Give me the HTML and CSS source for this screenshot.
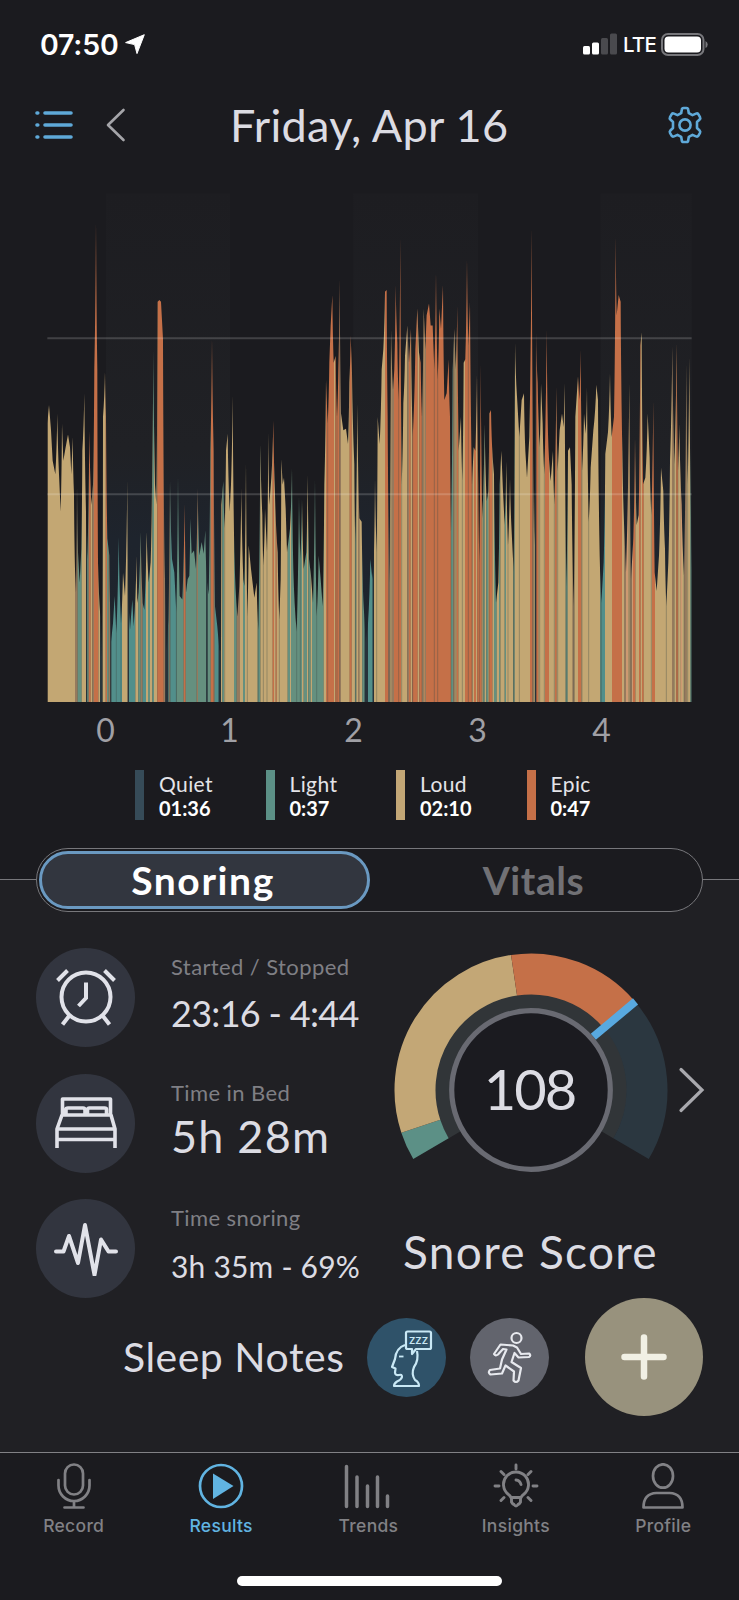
FILE: index.html
```html
<!DOCTYPE html>
<html lang="en">
<head>
    <meta charset="UTF-8">
    <meta name="viewport" content="width=device-width, initial-scale=1.0">
    <title>Sleep Results</title>
    <link rel="stylesheet" href="styles.css">
</head>
<body>

    <div class="status-bar">
        <span class="time">07:50</span>
        <svg class="location" width="20" height="20" viewBox="0 0 20 20"><path d="M19.3.7 12 19.6 9.6 10.6.6 8.6Z" fill="#fff" stroke="#fff" stroke-linejoin="round"/></svg>
        <svg class="signal" width="34" height="22" viewBox="0 0 34 22">
            <rect x="0" y="13" width="7" height="8.500" rx="1.500" fill="#fff"/>
            <rect x="9" y="9.500" width="7" height="12" rx="1.500" fill="#fff"/>
            <rect x="18" y="5" width="7" height="16.500" rx="1.500" fill="#4a4a4e"/>
            <rect x="27" y="0.500" width="7" height="21" rx="1.500" fill="#4a4a4e"/>
        </svg>
        <span class="network">LTE</span>
        <svg class="battery" width="47" height="23" viewBox="0 0 47 23">
            <rect x="1" y="1" width="41.500" height="21" rx="6" fill="none" stroke="#77777b" stroke-width="2"/>
            <rect x="3.500" y="3.500" width="36.500" height="16" rx="4" fill="#fff"/>
            <path d="M44.500 8v7q2.200-1 2.200-3.500T44.500 8Z" fill="#77777b"/>
        </svg>
    </div>

    <div class="header">
        <svg class="menu" width="38" height="30" viewBox="0 0 38 30" stroke="#5fa9d8" stroke-width="3.600" stroke-linecap="round">
            <path d="M2 3h.8M10 3h26M2 15h.8M10 15h26M2 27h.8M10 27h26"/>
        </svg>
        <svg class="prev" width="20" height="34" viewBox="0 0 20 34" fill="none" stroke="#a5a5a9" stroke-width="2.600" stroke-linecap="round" stroke-linejoin="round"><path d="M17.500 2 2 17l15.500 15"/></svg>
        <h1>Friday, Apr 16</h1>
        <svg class="settings" width="38" height="38" viewBox="0 0 38 38" fill="none" stroke="#5fa9d8" stroke-width="2.600" stroke-linejoin="round">
            <path d="M15.800 3.500Q16 2 17.500 2h3q1.500 0 1.700 1.500l.6 3.700 3.700 1.900 3.500-1.500q1.500-.6 2.300.6l1.700 2.900q.7 1.300-.4 2.400L31 16v6l2.600 2.500q1.100 1.100.4 2.400l-1.700 2.900q-.8 1.200-2.300.6l-3.500-1.500-3.700 1.900-.6 3.700Q22 36 20.500 36h-3q-1.500 0-1.700-1.500l-.6-3.700-3.700-1.900L8 30.400q-1.500.6-2.300-.6L4 26.900q-.7-1.300.4-2.400L7 22v-6l-2.600-2.500Q3.300 12.400 4 11.100l1.700-2.900Q6.500 7 8 7.600l3.500 1.500 3.700-1.900Z"/>
            <circle cx="19" cy="19" r="5.600"/>
        </svg>
    </div>

    <svg class="chart" viewBox="21 0 1935 1543" preserveAspectRatio="none">
        <defs>
            <linearGradient id="hourShade" x1="0" y1="0" x2="0" y2="1">
                <stop offset="0" stop-color="#1d1d21"/>
                <stop offset=".5" stop-color="#202125"/>
                <stop offset=".68" stop-color="#1e242d"/>
                <stop offset="1" stop-color="#1f252d"/>
            </linearGradient>
            <clipPath id="levels"><path id="profile"/></clipPath>
        </defs>
        <g fill="url(#hourShade)">
            <rect x="198" y="40" width="372" height="1503"/>
            <rect x="940" y="40" width="374" height="1503"/>
            <rect x="1682" y="40" width="273" height="1503"/>
        </g>
        <g id="bars" clip-path="url(#levels)"></g>
        <path d="M22 468H1955M22 929H1955" stroke="#fff" stroke-opacity=".17" stroke-width="6"/>
    </svg>

    <div class="axis">
        <span>0</span><span>1</span><span>2</span><span>3</span><span>4</span>
    </div>

    <div class="legend">
        <div class="legend-item quiet"><p>Quiet</p><b>01:36</b></div>
        <div class="legend-item light"><p>Light</p><b>0:37</b></div>
        <div class="legend-item loud"><p>Loud</p><b>02:10</b></div>
        <div class="legend-item epic"><p>Epic</p><b>0:47</b></div>
    </div>

    <div class="switch-row">
        <div class="switch">
            <button class="active">Snoring</button>
            <button>Vitals</button>
        </div>
    </div>

    <div class="details">
        <div class="stats">
            <div class="stat">
                <div class="stat-icon">
                    <svg width="62" height="62" viewBox="0 0 62 62" fill="none" stroke="#e1e2e9" stroke-width="4">
                        <circle cx="31" cy="30" r="24.500"/>
                        <path d="M31 15.500V31l-7.500 8M2.500 13.500 12.500 3.500M59.500 13.500 49.500 3.500M14.500 48.500 7.500 57.500M47.500 48.500 54.500 57.500"/>
                    </svg>
                </div>
                <div class="stat-text"><p>Started / Stopped</p><strong class="v-range">23:16 - 4:44</strong></div>
            </div>
            <div class="stat">
                <div class="stat-icon">
                    <svg width="62" height="52" viewBox="0 0 62 52" fill="none" stroke="#e1e2e9" stroke-width="3.600" stroke-linejoin="round">
                        <path d="M7.500 18V2h48v16M11 18v-5.500q0-1.500 2-1.500h15q2 0 2 2V18h2.500v-5q0-2 2-2h15q2 0 2 1.500V18M7 18h49L60 32H2ZM2 51V32M60 32v19M2 42.500h58"/>
                    </svg>
                </div>
                <div class="stat-text"><p>Time in Bed</p><strong class="v-bed">5h 28m</strong></div>
            </div>
            <div class="stat">
                <div class="stat-icon">
                    <svg width="64" height="54" viewBox="0 0 64 54" fill="none" stroke="#e1e2e9" stroke-width="4" stroke-linecap="round" stroke-linejoin="round">
                        <path d="M2 29.500h7.500L15 14l9 27L31 3l9.500 50L47 17.500l7.500 12H62"/>
                    </svg>
                </div>
                <div class="stat-text"><p>Time snoring</p><strong class="v-snoring">3h 35m - 69%</strong></div>
            </div>
        </div>

        <div class="score">
            <svg class="gauge" width="340" height="230" viewBox="380 948 340 230" fill="none">
                <path d="M456.600 1133.700A86.500 86.500 0 1 1 605.400 1133.700" stroke="#313538" stroke-width="19"/>
                <g stroke-width="41">
                    <path id="arcLight" stroke="#5c9086"/>
                    <path id="arcLoud" stroke="#c3a776"/>
                    <path id="arcEpic" stroke="#c57048"/>
                    <path id="arcRest" stroke="#2b3740"/>
                </g>
                <path d="M593.300 1036.800 635.500 1001.400" stroke="#58a9e0" stroke-width="8"/>
                <circle cx="531" cy="1090" r="79.300" fill="#1b1b20" stroke="#696a72" stroke-width="5.200"/>
                <text x="529.500" y="1110" text-anchor="middle" class="score-value">108</text>
                <path d="M681 1069.500 702 1090l-21 20.500" stroke="#a9a9ae" stroke-width="3.200" stroke-linecap="round"/>
            </svg>
            <h2>Snore Score</h2>
        </div>
    </div>

    <div class="notes">
        <h2>Sleep Notes</h2>
        <div class="note sleepy">
            <svg width="79" height="79" viewBox="0 0 79 79" fill="none" stroke="#c9e8f5" stroke-width="2.200" stroke-linejoin="round">
                <path d="M38 27q-9 3-10 14l-3 8 3.500 1.500-.5 4q0 3 4 2.500 3-1 3 2-1 3-5 4.500-3 2-3 4.500h25q0-4-4-6-4-6-1-13 5-7 3-16"/>
                <path d="M32 38.500h4.500" stroke-width="1.800"/>
                <path d="M39 15q0-1.500 1.500-1.500h22q1.500 0 1.500 1.500v14.500q0 1.500-1.500 1.500H49l-4 5v-5h-4.500Q39 31 39 29.500Z"/>
                <text x="51.800" y="26" text-anchor="middle" class="zzz">ZZZ</text>
            </svg>
        </div>
        <div class="note workout">
            <svg width="79" height="79" viewBox="0 0 79 79" fill="none" stroke="#e7e9ee" stroke-width="2.200" stroke-linejoin="round" stroke-linecap="round">
                <circle cx="46.500" cy="20" r="5"/>
                <path d="M43 27.500l-12.500-1-6.500 9.500q1.500 2.500 4 .5L33 31l3.500.5-4.500 10-2 9-10 1.500q-2.500 2.500.5 4.500L32 55.500l3.500-8 8.500 6-.5 9q2.500 3 5 0L51 50l-9.500-6 3-9 4 4.500 10.500-.5q2.500-2 0-3.500l-8 .5-4-6.500Z"/>
            </svg>
        </div>
        <div class="add-note">
            <svg width="46" height="46" viewBox="0 0 46 46" stroke="#f1f0e4" stroke-width="6.500" stroke-linecap="round"><path d="M23 3.500v39M3.500 23h39"/></svg>
        </div>
    </div>

    <div class="tab-bar">
        <div class="tab">
            <svg width="48" height="46" viewBox="0 0 48 46" fill="none" stroke="#818185" stroke-width="2.700" stroke-linecap="round">
                <rect x="15" y="1.500" width="18" height="30" rx="9"/>
                <path d="M8.500 17v5.500a15.500 15.500 0 0 0 31 0V17M24 38v6M14.500 44.500h19"/>
            </svg>
            <span>Record</span>
        </div>
        <div class="tab current">
            <svg width="48" height="46" viewBox="0 0 48 46"><circle cx="24" cy="23" r="21" fill="none" stroke="#61b4e2" stroke-width="2.700"/><path d="M16 10.500v25.500L36.500 23Z" fill="#61b4e2"/></svg>
            <span>Results</span>
        </div>
        <div class="tab">
            <svg width="48" height="46" viewBox="0 0 48 46" stroke="#818185" stroke-width="3.500" stroke-linecap="round"><path d="M2.500 3.500V43.500M13 14V43.500M23.500 23v20.500M33.500 14V43.500M43.500 33v10.500"/></svg>
            <span>Trends</span>
        </div>
        <div class="tab">
            <svg width="48" height="46" viewBox="0 0 48 46" fill="none" stroke="#818185" stroke-width="2.900" stroke-linecap="round">
                <path d="M19 34.500q-1-2-2.500-3a12.500 12.500 0 1 1 15 0q-1.500 1-2.500 3ZM19.500 35v4q1 2 2.500 2.500 2 3 4 0Q27.500 41 28.500 39v-4M24 17q4 .5 5 4.500"/>
                <path d="M24 2v4M9 8.500l3 3M39 8.500l-3 3M3 23h4M41 23h4M9 37.500l3-3M39 37.500l-3-3"/>
            </svg>
            <span>Insights</span>
        </div>
        <div class="tab">
            <svg width="48" height="46" viewBox="0 0 48 46" fill="none" stroke="#818185" stroke-width="2.700">
                <ellipse cx="24" cy="13" rx="10" ry="11.700"/>
                <path d="M4.500 44.500q0-14 13-14.500h13q13 .5 13 14.500Z" stroke-linejoin="round"/>
            </svg>
            <span>Profile</span>
        </div>
    </div>
    <div class="home-indicator"></div>

    <script src="chart.js"></script>
</body>
</html>
```
FILE: styles.css
```css
* {
    box-sizing: border-box;
}

body {
    margin: 0;
    width: 739px;
    height: 1600px;
    overflow: hidden;
    background: #1b1b1f;
    color: #dcdce3;
    font-family: Lato, sans-serif;
}

p, h1, h2 {
    margin: 0;
    font-weight: 400;
}

svg {
    display: block;
    flex: none;
}

/* top */
.status-bar {
    display: flex;
    align-items: center;
    height: 88px;
    padding: 0 31px 0 40px;
    font-family: Inter, sans-serif;
    color: #fff;
}

.time {
    width: 85px;
    font-size: 28.500px;
    font-weight: 600;
    letter-spacing: -0.2px;
}

.signal {
    margin-left: auto;
}

.network {
    width: 37px;
    margin: 0 1px 0 6px;
    font-size: 20.500px;
    font-weight: 500;
    letter-spacing: -0.8px;
}

.header {
    display: flex;
    align-items: center;
    height: 74px;
    padding: 0 35px;
}

.prev {
    margin-left: 33px;
}

.header h1 {
    flex: 1;
    padding-left: 104px;
    font-size: 45px;
    line-height: 72px;
    letter-spacing: 0.3px;
    white-space: nowrap;
}

/* chart */
.chart {
    width: 645px;
    height: 522px;
    margin: 18px 0 0 47px;
}

.axis {
    display: grid;
    grid-template-columns: repeat(5, 124px);
    margin-left: 43.500px;
    height: 56px;
    line-height: 56px;
    text-align: center;
    font-size: 32px;
    color: #a0a0a5;
}

.legend {
    display: grid;
    grid-template-columns: repeat(4, 130.500px);
    margin: 12px 0 0 135px;
}

.legend-item {
    height: 50px;
    padding: 2px 0 0 15px;
    border-left: 9px solid;
    font-size: 21px;
    line-height: 24px;
}

.legend-item p {
    color: #e4e4e8;
    letter-spacing: 0.4px;
}

.legend-item b {
    color: #fff;
    font-size: 20px;
}

.quiet { border-color: #364b58; }
.light { border-color: #5c9086; }
.loud { border-color: #c3a776; }
.epic { border-color: #c57048; }

.switch-row {
    margin-top: 28px;
    padding: 0 36px;
    background: linear-gradient(#1b1b1f 31px, #77777b 31px, #77777b 32.500px, #202024 32.500px);
}

.switch {
    display: flex;
    height: 64px;
    padding: 2px;
    border: 1.500px solid #77777b;
    border-radius: 32px;
    background: #1b1b1f;
}

.switch button {
    flex: 1;
    border: 0;
    padding: 0 3px 0 0;
    background: none;
    font: 700 39px/48px Lato, sans-serif;
    letter-spacing: 0.6px;
    color: #717175;
}

.switch .active {
    flex: none;
    width: 331px;
    border: 3.500px solid #6a99c1;
    border-radius: 30px;
    background: #32363f;
    color: #fff;
    letter-spacing: 1.600px;
}

/* details */
.details {
    display: flex;
    height: 388px;
    padding: 36px 0 0 36px;
    background: #202024;
}

.stats {
    width: 344px;
}

.stat {
    display: flex;
    height: 99px;
    margin-bottom: 26.500px;
}

.stat-icon {
    display: flex;
    align-items: center;
    justify-content: center;
    width: 99px;
    height: 99px;
    margin-right: 36px;
    border-radius: 50%;
    background: #32353f;
}

.stat-text {
    white-space: nowrap;
}

.stat-text p {
    font-size: 22px;
    line-height: 38px;
    letter-spacing: 0.4px;
    color: #7f7f84;
}

.stat-text strong {
    display: block;
    font-weight: 400;
    line-height: 54px;
}

.v-range { font-size: 36px; letter-spacing: -0.7px; }
.v-bed { font-size: 45px; margin-top: -3px; letter-spacing: 1.200px; }
.v-snoring { font-size: 30px; margin-top: 2px; letter-spacing: 0.2px; }

.score-value {
    font-size: 56px;
    letter-spacing: -2px;
    fill: #dcdce3;
}

.score h2 {
    width: 301px;
    margin-top: 47px;
    text-align: center;
    font-size: 46px;
    line-height: 54px;
    letter-spacing: 1.300px;
}

.notes {
    display: flex;
    align-items: center;
    height: 152px;
    padding: 0 36px 38px 123px;
    background: #202024;
}

.notes h2 {
    width: 244px;
    margin-top: -2px;
    font-size: 41px;
    letter-spacing: 0.5px;
    white-space: nowrap;
}

.note {
    width: 79px;
    height: 79px;
    margin-right: 23.500px;
    border-radius: 50%;
}

.sleepy { background: #2f5269; }
.workout { background: #62646d; }

.zzz {
    font: 700 9.500px Lato, sans-serif;
    fill: #c9e8f5;
    stroke: none;
    letter-spacing: 0.6px;
}

.add-note {
    display: flex;
    align-items: center;
    justify-content: center;
    width: 118px;
    height: 118px;
    margin-left: auto;
    border-radius: 50%;
    background: #98927d;
}

/* bottom */
.tab-bar {
    display: flex;
    height: 124px;
    border-top: 1.500px solid #818185;
    padding-top: 10px;
}

.tab {
    width: 147.400px;
    display: flex;
    flex-direction: column;
    align-items: center;
    font-family: Inter, sans-serif;
    font-size: 17.500px;
    font-weight: 500;
    line-height: 22px;
    letter-spacing: 0.3px;
    color: #818185;
    gap: 6px;
}

.current {
    color: #61b4e2;
}

.home-indicator {
    width: 265px;
    height: 10px;
    margin: 0 auto;
    border-radius: 5px;
    background: #fff;
}
```
FILE: chart.js
```js
// each block: x offset, then x,level pairs (0 = top, 1543 = baseline)
const levels = [
    [0, "22,1543 22,720 27,665 33,740 38,830 46,870 52,690 57,870 62,980 66,720 70,830 76,795 84,752 90,790 94,870 98,760 102,930 105,1150 108,1220 111,900 114,1100 119,1190 124,1090 127,800 133,630 138,980 142,1120 148,740 154,960 159,900 163,560 168,118 172,560 174,1130 181,1290 183,1410 186,1300 189,700 195,565 198,700 202,1060 208,1110 213,1365 219,1310 224,1230 229,1340 236,1055 243,1310 249,1160 255,1230 262,885 266,1260 270,1330 277,1240 281,1320 290,1110 292,1250 296,1220 302,1040 308,1250 313,1270 320,1040 326,1190 332,1130 336,900 340,500 345,900 349,960 353,360 358,355 363,360 369,470 372,980 375,1180 380,1390 385,1300 390,885 396,1120 403,1160 409,1280 414,870 419,1230 427,1240 434,955 438,1220 443,1180 448,1170 451,1000 455,1105 462,1095 468,1150 473,910 478,1110 485,1070 491,1105 496,1035 500,1180 506,1225 511,800 516,465 521,800 525,1260 532,1320 538,1390 543,1390 544,960 550,890 554,1030 558,800 563,750 569,980 573,900 578,635 583,1100 592,1290 598,1200 604,910 610,1180 613,1200 618,830 622,1290"],
    [510, "116,1080 123,1150 133,1235 140,1190 145,1330 151,780 157,990 160,1140 165,970 171,1100 175,745 178,960 184,880 190,710 195,930 203,1100 208,1300 212,1180 214,825 218,900 222,880 227,970 231,1100 240,1030 246,850 250,1150 260,1335 267,930 271,1120 276,940 281,1150 289,1100 293,870 297,1120 303,1170 309,1250 315,880 320,1290 326,1110 332,1180 338,1260 343,900 348,590 353,720 358,540 362,430 367,340 371,540 377,520 381,700 385,560 389,290 393,690 400,740 408,735 414,780 418,600 422,460 426,570 433,840 436,1080 442,660 448,1000 455,1010 460,1240 467,1365 474,1310 481,1120 487,1180 491,1140 495,880 500,1100 503,700 509,780 515,560 520,500 525,330 530,325 533,700 538,1190 543,440 549,620 553,560 557,310 562,480 566,650 571,165 575,900 580,660 585,520 592,430 597,540 603,440 608,760 616,500 622,380 627,510 632,540 636,700"],
    [990, "161,380 166,500 170,400 177,365 182,430 188,430 193,560 198,270 203,590 208,380 213,440 219,310 223,650 230,630 236,530 240,700 243,1040 248,560 253,440 257,560 262,370 266,800 273,700 277,890 281,540 286,530 291,230 295,490 300,360 306,900 311,790 316,800 321,570 325,900 328,1130 332,540 337,1000 344,720 350,950 355,920 358,690 363,680 368,820 372,870 378,1250 385,1190 389,900 394,800 399,920 404,1020 409,830 414,1080 420,880 425,1040 431,1160 435,480 441,640 448,760 455,650 462,630 466,800 471,880 478,760 485,140 489,780 493,1080 498,450 503,600 509,790 513,600 518,720 523,870 530,440"],
    [1440, "84,750 92,890 99,800 103,960 109,610 113,860 119,740 126,690 131,730 134,600 139,1200 144,800 150,790 155,900 161,1260 166,700 174,580 178,650 182,500 186,860 192,690 197,750 201,610 206,1010 212,850 220,740 229,605 234,650 238,1050 244,1250 251,1130 256,810 264,745 270,570 275,760 282,700 287,165 290,400 296,340 302,360 307,800 314,1060 318,1160 328,600 333,1180 340,1060 345,760 350,1020 356,990 361,490 365,450 369,900 376,880 383,690 389,820 394,990 400,650 404,1160 410,1215 417,1110 423,850 430,920 435,1090 439,1260 445,1130 450,830 457,490 463,840 470,480 474,860 478,720 485,960 492,1170 499,540 503,900 508,520 513,1000 515,1150 515,1543"]
];

// start of every colour run: t loud, g/s light, o epic, b/r mixed, d quiet
const runs = [
    [0, "22t 105b 113g 125t 138d 141g 146o 152t 157b 162o 175t 180d 188t 197o 201g 206b 211d 214s 246t 263d 267s 286t 295g 302b 308s 318t 324g 330t 337g 342t 352o 371b 376d 385g 388b 391s 409g 431o 437g 470b 474g 499d 503g 512o 521b 524s 536d 543t 547g 552t 582g 590b 600t 609g 615t"],
    [510, "143g 151t 188o 192t 197o 200t 233g 240t 243g 276t 281g 291t 295g 302t 306g 341t 348o 372t 376o 388b 393t 419o 425t 436g 439t 444b 448t 457g 464d 474s 488d 492t 525o 535b 541t 545b 552o 573t 592b 597o 602t 607o 623t 628o 636b 641t 644o"],
    [990, "165b 168o 243g 250b 254t 260o 265t 285o 307t 312o 318t 322o 335t 340g 344t 349g 355t 358o 367t 372g 380t 387g 391t 404g 408t 430g 434t 480o 487b 491t 495d 499o 505t"],
    [1440, "75o 87t 105o 110t 137g 143t 158b 163t 174o 184t 241s 255t 276o 306t 312b 318r 325t 329b 335r 339o 346t 357o 362t 366o 371t 396o 405t 456b 461t 469o 474t 482r 486t 492b 500t 511g"]
];

const colors = { t: "#c3a773", g: "#65907f", s: "#528f8b", o: "#c57048", b: "#967a5d", r: "#cd9971", d: "#27323a" };
const svgNS = "http://www.w3.org/2000/svg";
const bars = document.getElementById("bars");

function addBar(x, width, color, opacity) {
    const rect = document.createElementNS(svgNS, "rect");
    rect.setAttribute("x", x);
    rect.setAttribute("y", 0);
    rect.setAttribute("width", width);
    rect.setAttribute("height", 1543);
    rect.setAttribute("fill", color);
    rect.setAttribute("fill-opacity", opacity);
    bars.appendChild(rect);
}

const points = levels.flatMap(([offset, list]) =>
    list.split(" ").map(pair => {
        const [x, y] = pair.split(",").map(Number);
        return { x: x + offset, y };
    })
);

// steep sides bend towards the peak so that it stays thin
let d = `M${points[0].x} ${points[0].y}`;
for (let i = 1; i < points.length; i++) {
    const a = points[i - 1], b = points[i];
    const steep = Math.abs(a.y - b.y) > 130 && Math.abs(a.x - b.x) > 1;
    if (steep) {
        const peak = a.y < b.y ? a : b;
        const low = a.y < b.y ? b : a;
        const cx = peak.x + (low.x - peak.x) * 0.3;
        const cy = peak.y + (low.y - peak.y) * 0.6;
        d += `Q${cx} ${cy} ${b.x} ${b.y}`;
    } else {
        d += `L${b.x} ${b.y}`;
    }
}
document.getElementById("profile").setAttribute("d", d + "Z");

const starts = runs.flatMap(([offset, list]) =>
    list.split(" ").map(run => ({ x: parseInt(run) + offset, color: colors[run.slice(-1)] }))
);
starts.forEach((run, i) => {
    const end = i + 1 < starts.length ? starts[i + 1].x : 1955;
    addBar(run.x, end - run.x + 0.5, run.color, 1);
});

// darker seam under every deep dip
for (let i = 2; i < points.length - 2; i++) {
    const dip = Math.min(points[i].y - points[i - 1].y, points[i].y - points[i + 1].y);
    if (dip > 100 && points[i].x > 105) {
        addBar(points[i].x - 1.5, 3, "#3d4a45", 0.35);
    }
}

// gauge arcs, degrees clockwise from 12 o'clock
function arc(id, from, to) {
    const r = 116;
    const point = deg => {
        const a = deg * Math.PI / 180;
        return `${531 + r * Math.sin(a)} ${1090 - r * Math.cos(a)}`;
    };
    document.getElementById(id).setAttribute("d", `M${point(from)}A${r} ${r} 0 0 1 ${point(to)}`);
}

arc("arcLight", -120.4, -108.2);
arc("arcLoud", -108.2, -8.4);
arc("arcEpic", -8.4, 49.3);
arc("arcRest", 49.3, 120.4);
```
